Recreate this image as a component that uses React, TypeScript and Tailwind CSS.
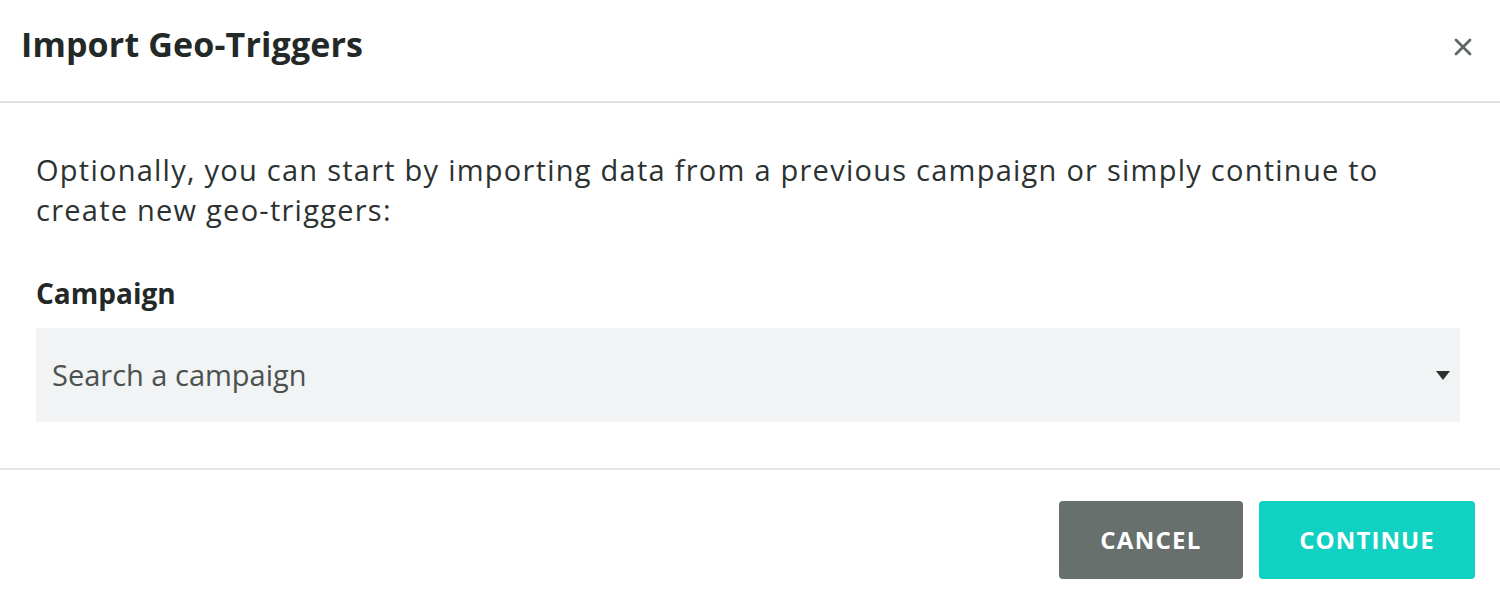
import React from "react";

const font = { fontFamily: '"Open Sans", "Liberation Sans", sans-serif' };

export default function App() {
  return (
    <div className="w-[1500px] h-[600px] bg-white text-[#222927]" style={font}>
      <div className="h-[103px] flex items-start justify-between pt-[24px] pl-[21px] pr-[28px] border-b-2 border-[#dfe2e4]">
        <h1 className="text-[34px] leading-[40px] font-bold tracking-[0.15px] text-[#222927]">Import Geo-Triggers</h1>
        <svg width="18" height="18" viewBox="0 0 18 18" className="mt-[14px] text-[#5f6664]">
          <path d="M2 2 L16 16 M16 2 L2 16" stroke="currentColor" strokeWidth="2.8" strokeLinecap="round" />
        </svg>
      </div>
      <div className="pl-9 pr-10 pt-[47px] pb-[46px] border-b-2 border-[#e4e6e8]">
        <p className="text-[29px] leading-[40px] tracking-[1.25px] text-[#2b3230]">
          Optionally, you can start by importing data from a previous campaign or simply continue to
          <br />
          create new geo-triggers:
        </p>
        <label className="block mt-[44px] mb-[16px] text-[28px] leading-[38px] font-bold text-[#222927]">Campaign</label>
        <div className="h-[94px] bg-[#f2f3f4] flex items-center justify-between pl-4 pr-[10px]">
          <span className="text-[29px] text-[#4a5250]">Search a campaign</span>
          <svg width="14" height="9" viewBox="0 0 14 9">
            <path d="M0 0 H14 L7 9 Z" fill="#2b3230" />
          </svg>
        </div>
      </div>
      <div className="flex justify-end gap-4 pt-[31px] pr-[25px]">
        <button className="w-[184px] h-[78px] rounded bg-[#68706d] text-white text-[24px] tracking-[1.3px] font-bold">CANCEL</button>
        <button className="w-[216px] h-[78px] rounded bg-[#11d1c2] text-white text-[24px] tracking-[1.1px] font-bold">CONTINUE</button>
      </div>
    </div>
  );
}
